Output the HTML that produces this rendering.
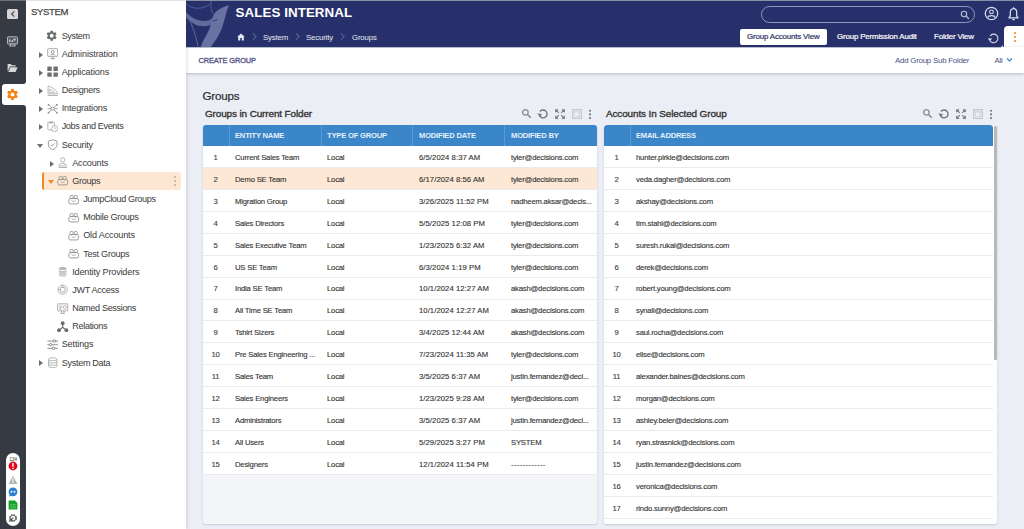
<!DOCTYPE html>
<html lang="en">
<head>
<meta charset="utf-8">
<title>Sales Internal - Groups</title>
<style>
*{box-sizing:border-box;margin:0;padding:0}
html,body{width:1024px;height:529px;overflow:hidden}
body{font-family:"Liberation Sans",Arial,sans-serif;background:#eceef5;color:#333;position:relative;font-size:9px}
.abs{position:absolute}
/* left rail */
#rail{position:absolute;left:0;top:0;width:26px;height:529px;background:#363a42}
#railtop{position:absolute;left:0;top:0;width:26px;height:1px;background:#6f7279}
#collapse{position:absolute;left:7px;top:8.500px;width:11px;height:10.800px;background:#d6d6d9;border-radius:1.500px}
#seltab{position:absolute;left:2px;top:84px;width:25px;height:21px;background:#fff;border-radius:3px 0 0 3px}
.corner{position:absolute;left:23px;width:3px;height:3px;background:#fff}
.corner i{position:absolute;left:0;top:0;width:3px;height:3px;background:#363a42;display:block}
#pill{position:absolute;left:6px;top:453px;width:14px;height:73px;background:#fff;border-radius:7px}
#pill .n{position:absolute;left:0;top:3px;width:14px;text-align:center;font-size:5px;color:#444;letter-spacing:-.2px}
/* sidebar */
#side{position:absolute;left:26px;top:0;width:160px;height:529px;z-index:3;background:#fff;box-shadow:1px 0 3px rgba(60,70,110,.18)}
#sidetop{position:absolute;left:0;top:0;width:160px;height:1px;background:#e4e4e6}
#side h2{position:absolute;left:5px;top:5.800px;font-size:9.600px;font-weight:normal;color:#4a4a4a;letter-spacing:-.38px;line-height:12px;-webkit-text-stroke:.25px #4a4a4a}
.ti{position:absolute;left:0;height:18px;line-height:18px;font-size:9.1px;color:#3a3a3a;white-space:nowrap;letter-spacing:-.32px}
.ti .ar{position:absolute;top:6.8px;width:0;height:0;border-left:4.800px solid #6e6e6e;border-top:3.1px solid transparent;border-bottom:3.1px solid transparent}
.ti .ad{position:absolute;top:8px;width:0;height:0;border-top:4.800px solid #6e6e6e;border-left:3.1px solid transparent;border-right:3.1px solid transparent}
.ti svg{position:absolute;top:3.500px;width:11.400px;height:11.400px;margin-left:-.3px}
.ti span{position:absolute;top:0}
#selrow{position:absolute;left:15.500px;top:172px;width:139px;height:18.300px;background:#fde7d3;border-radius:2.500px;border-left:2.900px solid #f28a1e}
/* header */
#hdr{position:absolute;left:186px;top:0;width:838px;height:47px;background:#27306a;border-top:1px solid #8b8fa5}
#hdr h1{position:absolute;left:49.5px;top:4.300px;font-size:13.4px;line-height:15px;font-weight:bold;color:#fff;white-space:nowrap;letter-spacing:.05px}
.bc{position:absolute;top:31px;font-size:7.8px;line-height:11px;color:#e8eaf3;white-space:nowrap;letter-spacing:-.15px}
.chev{position:absolute;top:33.300px;margin-left:-1px;width:4.500px;height:4.500px;border-top:1px solid #5d6597;border-right:1px solid #5d6597;transform:rotate(45deg)}
#search{position:absolute;left:575px;top:4.500px;width:214px;height:17.400px;border:1.200px solid #9096bc;border-radius:9px}
.tab{position:absolute;top:31.300px;font-size:7.9px;line-height:10px;color:#fff;white-space:nowrap;letter-spacing:-.15px;-webkit-text-stroke:.2px #fff}
#tabsel{position:absolute;left:554px;top:28px;width:86.500px;height:15.600px;background:#fff;border-radius:2px}
#moretab{position:absolute;left:817.600px;top:25px;width:21px;height:22px;background:#fff;border-radius:4px 0 0 0}
/* action bar */
#act{position:absolute;left:186px;top:47px;width:838px;height:25.700px;background:#fff;box-shadow:0 1px 3px rgba(70,72,90,.30);border-top:1px solid #b9bccf}
#act .l{position:absolute;left:12.500px;top:8px;font-size:7.4px;line-height:10px;color:#4c5282;letter-spacing:-.1px;-webkit-text-stroke:.3px #4c5282;white-space:nowrap}
#act .r{position:absolute;top:7.500px;font-size:7.9px;line-height:10px;color:#4a5181;letter-spacing:-.15px;white-space:nowrap}
/* content */
#title{position:absolute;left:202.500px;top:88.500px;font-size:11.6px;line-height:14px;color:#2b2b2b;letter-spacing:-.2px;-webkit-text-stroke:.2px #2b2b2b}
.ph{position:absolute;top:107.800px;font-size:9.950px;line-height:12px;color:#333;white-space:nowrap;letter-spacing:-.12px;-webkit-text-stroke:.35px #333}
.panel{position:absolute;top:125px;height:399px;background:#f4f5f9;border-radius:3px;box-shadow:0 1px 2px rgba(70,80,120,.22);overflow:hidden}
.th{position:absolute;left:0;top:0;height:21px;background:#3a86c8;width:100%}
.th b{position:absolute;top:5.800px;font-size:7.600px;line-height:10px;color:#e6f0fa;white-space:nowrap;letter-spacing:-.2px}
.th i{position:absolute;top:0;width:1px;height:21px;background:#5b9bd3;display:block}
.row{position:absolute;left:0;height:21.93px;background:#fff;border-bottom:1px solid #e9eaf0;width:100%}
.row.sel{background:#fde8d5}
.row span{position:absolute;top:6.900px;font-size:7.7px;line-height:10px;color:#333;white-space:nowrap;letter-spacing:-.2px;-webkit-text-stroke:.12px #333}
.row .n{left:0;width:25px;text-align:center;color:#444}
.row .c1{left:32px}.row .c2{left:124px}.row .c3{left:216px;letter-spacing:.06px}.row .c4{left:308px}
.row.r2{width:389px}
.tool{position:absolute;top:108.800px;height:11px}
</style>
</head>
<body>

<!-- ================= LEFT RAIL ================= -->
<div id="rail">
  <div id="railtop"></div>
  <div id="collapse"><svg class="abs" style="left:.5px;top:.4px" width="10" height="10" viewBox="0 0 10 10"><path d="M6.300 2.300 L3.600 5 L6.300 7.700" fill="none" stroke="#4a4d55" stroke-width="1.2"/></svg></div>
  <svg class="abs" style="left:7px;top:36px" width="11" height="11" viewBox="0 0 11 11"><rect x=".5" y=".8" width="10" height="7.200" rx=".6" fill="#555960" stroke="#b4b6bc" stroke-width="1"/><rect x="2" y="3.4" width="1.4" height="2.6" fill="#c9cbd0"/><rect x="4.6" y="4.2" width="1.4" height="1.8" fill="#c9cbd0"/><circle cx="7.6" cy="3.6" r="1.2" fill="#c9cbd0"/><path d="M4 7.6 L3 10 M7 7.6 L8 10 M2.4 10 H8.6" stroke="#c9cbd0" stroke-width=".9" fill="none"/></svg>
  <svg class="abs" style="left:7px;top:63px" width="11" height="10" viewBox="0 0 11 10"><path d="M.6 1 H3.8 L4.8 2.2 H8.6 V3.6 H3 L.6 8.6 Z" fill="#d4d6da"/><path d="M3.4 4.2 H10.6 L8.6 8.9 H1.2 Z" fill="#d4d6da"/></svg>
  <div id="seltab"></div>
  <div class="corner" style="top:81px"><i style="border-radius:0 0 3px 0"></i></div>
  <div class="corner" style="top:105px"><i style="border-radius:0 3px 0 0"></i></div>
  <svg class="abs" style="left:6px;top:88px" width="13" height="13" viewBox="0 0 24 24"><path fill="#f5820d" d="M19.4 13c.04-.33.06-.66.06-1s-.02-.67-.07-1l2.11-1.65a.5.5 0 0 0 .12-.64l-2-3.46a.5.5 0 0 0-.61-.22l-2.49 1a7.3 7.3 0 0 0-1.73-1l-.38-2.65A.49.49 0 0 0 13.920 2h-4a.49.49 0 0 0-.49.42l-.38 2.650a7.700 7.700 0 0 0-1.730 1l-2.490-1a.5.5 0 0 0-.61.220l-2 3.460a.49.490 0 0 0 .12.640L4.450 11a7.900 7.900 0 0 0 0 2l-2.110 1.650a.5.5 0 0 0-.12.640l2 3.460c.12.220.39.300.610.220l2.490-1c.52.400 1.080.730 1.730 1l.38 2.650c.3.240.24.420.49.420h4c.25 0 .46-.18.490-.42l.38-2.650a7.300 7.300 0 0 0 1.730-1l2.490 1c.23.090.49 0 .61-.22l2-3.460a.5.5 0 0 0-.12-.64L19.400 13zM12 15.800a3.800 3.800 0 1 1 0-7.600 3.800 3.800 0 0 1 0 7.600z"/></svg>
  <div id="pill">
    <div class="n">134</div>
    <svg class="abs" style="left:1.800px;top:8.300px" width="10" height="10" viewBox="0 0 10 10"><circle cx="5" cy="5" r="4.400" fill="#e3061d"/><rect x="4.3" y="1.8" width="1.4" height="4" fill="#fff"/><rect x="4.3" y="6.7" width="1.4" height="1.4" fill="#fff"/></svg>
    <svg class="abs" style="left:1.800px;top:21.500px" width="10" height="10" viewBox="0 0 10 10"><path d="M5 .8 L9.4 9 H.6 Z" fill="#b3b3b3"/><rect x="4.4" y="3.4" width="1.2" height="3" fill="#fff"/><rect x="4.4" y="7" width="1.2" height="1.1" fill="#fff"/></svg>
    <svg class="abs" style="left:1.800px;top:34.200px" width="10" height="10" viewBox="0 0 10 10"><circle cx="5" cy="4.8" r="4.4" fill="#2f7fd1"/><path d="M1.6 7.4 L1 9.6 L3.6 8.6 Z" fill="#2f7fd1"/><circle cx="3.500" cy="4.800" r=".95" fill="#fff"/><circle cx="6.500" cy="4.800" r=".95" fill="#fff"/></svg>
    <svg class="abs" style="left:1.800px;top:47px" width="10" height="10" viewBox="0 0 10 10"><path d="M.6.6 H7 L9.400 3 V9.400 H.6 Z" fill="#15a526"/><path d="M2 4.600 H8 M2 6.200 H8 M2 7.800 H8" stroke="#6fd07a" stroke-width=".6"/></svg>
    <svg class="abs" style="left:1.800px;top:60.300px" width="10" height="10" viewBox="0 0 10 10"><circle cx="5" cy="5" r="3.300" fill="none" stroke="#444" stroke-width="1.100" stroke-dasharray="1.7 .9"/><circle cx="5" cy="5" r="2.800" fill="none" stroke="#444" stroke-width=".7"/><path d="M1.300 8.700 L5.400 4.600" stroke="#444" stroke-width="1.100"/></svg>
  </div>
</div>

<!-- ================= SIDEBAR ================= -->
<div id="side">
  <div id="sidetop"></div>
  <h2>SYSTEM</h2>
  <div id="selrow"></div>
  <svg class="abs" style="left:147px;top:175px" width="4" height="12" viewBox="0 0 4 12"><circle cx="2" cy="2" r=".9" fill="#b7a596"/><circle cx="2" cy="6" r=".9" fill="#b7a596"/><circle cx="2" cy="10" r=".9" fill="#b7a596"/></svg>
  <div id="tree">
  <div class="ti" style="top:26.55px"><svg style="left:20.4px" viewBox="0.600 0.600 22.800 22.800"><path fill="#6b6b6b" d="M19.4 13c.04-.33.06-.66.06-1s-.02-.67-.07-1l2.11-1.65a.5.5 0 0 0 .12-.64l-2-3.46a.5.5 0 0 0-.61-.22l-2.49 1a7.3 7.3 0 0 0-1.73-1l-.38-2.65A.49.49 0 0 0 13.920 2h-4a.49.49 0 0 0-.49.42l-.38 2.650a7.700 7.700 0 0 0-1.730 1l-2.490-1a.5.5 0 0 0-.61.220l-2 3.460a.49.490 0 0 0 .12.640L4.450 11a7.900 7.900 0 0 0 0 2l-2.110 1.650a.5.5 0 0 0-.12.640l2 3.460c.12.220.39.300.610.220l2.490-1c.52.400 1.080.730 1.730 1l.38 2.650c.3.240.24.420.49.420h4c.25 0 .46-.18.490-.42l.38-2.650a7.300 7.300 0 0 0 1.730-1l2.490 1c.23.090.49 0 .61-.22l2-3.460a.5.5 0 0 0-.12-.64L19.400 13zM12 15.900a3.900 3.900 0 1 1 0-7.800 3.900 3.900 0 0 1 0 7.800z"/></svg><span style="left:35.7px;letter-spacing:-0.40px">System</span></div>
  <div class="ti" style="top:44.72px"><i class="ar" style="left:12.5px"></i><svg style="left:21px" viewBox="0 0 11 11"><rect x=".7" y=".7" width="9.6" height="7.4" rx=".6" fill="none" stroke="#9a9a9a" stroke-width=".8"/><circle cx="5.5" cy="3.8" r="1.4" fill="none" stroke="#8a8a8a" stroke-width=".8"/><path d="M3.3 7.2 C3.8 5.600 7.200 5.600 7.700 7.200" fill="none" stroke="#8a8a8a" stroke-width=".8"/><path d="M3.200 10.300 H7.800 M5.500 8.100 V10.300" stroke="#9a9a9a" stroke-width=".9"/></svg><span style="left:35.7px;letter-spacing:-0.11px">Administration</span></div>
  <div class="ti" style="top:62.89px"><i class="ar" style="left:12.5px"></i><svg style="left:21px" viewBox="0 0 11 11"><rect x=".3" y=".5" width="4.3" height="4.3" rx=".5" fill="#707070"/><rect x="6.2" y=".5" width="4.3" height="4.3" rx=".5" fill="#707070"/><rect x=".3" y="6.2" width="4.3" height="4.3" rx=".5" fill="#707070"/><rect x="6.2" y="6.2" width="4.3" height="4.3" rx=".5" fill="#707070"/></svg><span style="left:35.7px;letter-spacing:-0.14px">Applications</span></div>
  <div class="ti" style="top:81.06px"><i class="ar" style="left:12.5px"></i><svg style="left:21px" viewBox="0 0 11 11"><path d="M1 1 V8.600 H10.300 C9.600 5.600 6 2.400 1 1 Z" fill="none" stroke="#a5a5a5" stroke-width=".8"/><path d="M2.600 4 V7.200 H7 C6 5.600 4.600 4.600 2.600 4 Z" fill="none" stroke="#a5a5a5" stroke-width=".7"/><path d="M.6 10.200 H10.400" stroke="#a5a5a5" stroke-width=".8"/></svg><span style="left:35.7px;letter-spacing:-0.31px">Designers</span></div>
  <div class="ti" style="top:99.23px"><i class="ar" style="left:12.5px"></i><svg style="left:21px" viewBox="0 0 11 11"><path d="M1.600 1.800 L9.400 9.200 M9.400 1.800 L1.600 9.200 M.6 5.500 H10.400" stroke="#8d8d8d" stroke-width=".8"/><circle cx="5.5" cy="5.5" r="1.5" fill="#fff" stroke="#8d8d8d" stroke-width=".8"/><circle cx="1.5" cy="1.7" r=".9" fill="#8d8d8d"/><circle cx="9.5" cy="1.7" r=".9" fill="#8d8d8d"/><circle cx="1.5" cy="9.3" r=".9" fill="#8d8d8d"/><circle cx="9.5" cy="9.3" r=".9" fill="#8d8d8d"/></svg><span style="left:35.7px;letter-spacing:-0.18px">Integrations</span></div>
  <div class="ti" style="top:117.40px"><i class="ar" style="left:12.5px"></i><svg style="left:21px" viewBox="0 0 11 11"><rect x=".8" y="1" width="6.4" height="7.6" rx=".7" fill="none" stroke="#a8a8a8" stroke-width=".8"/><path d="M2.300 .8 H5.700 V2.400 H2.300 Z" fill="#a8a8a8"/><circle cx="7.3" cy="7.3" r="2.9" fill="#fff" stroke="#a8a8a8" stroke-width=".8"/><path d="M7.300 5.700 V7.400 L8.500 8.100" fill="none" stroke="#a8a8a8" stroke-width=".7"/></svg><span style="left:35.7px;letter-spacing:-0.37px">Jobs and Events</span></div>
  <div class="ti" style="top:135.57px"><i class="ad" style="left:11.2px"></i><svg style="left:21px" viewBox="0 0 11 11"><path d="M5.500 .7 L9.700 2.200 V5.400 C9.700 7.800 7.800 9.600 5.500 10.400 C3.200 9.600 1.300 7.800 1.300 5.400 V2.200 Z" fill="none" stroke="#8f8f8f" stroke-width=".85"/><path d="M3.700 5.500 L5 6.800 L7.400 4.200" fill="none" stroke="#8f8f8f" stroke-width=".85"/></svg><span style="left:35.7px;letter-spacing:-0.21px">Security</span></div>
  <div class="ti" style="top:153.74px"><i class="ar" style="left:23.7px"></i><svg style="left:31.5px" viewBox="0 0 11 11"><rect x="3.7" y=".8" width="3.6" height="4" rx="1.2" fill="none" stroke="#a9a9a9" stroke-width=".8"/><path d="M1.800 8 C2.200 5.600 8.800 5.600 9.200 8 V8.600 H1.800 Z" fill="none" stroke="#a9a9a9" stroke-width=".8"/><path d="M1.400 10.200 H9.600" stroke="#a9a9a9" stroke-width=".9"/></svg><span style="left:46.2px;letter-spacing:-0.19px">Accounts</span></div>
  <div class="ti" style="top:171.91px"><i class="ad" style="left:22px;border-top-color:#f28a1e"></i><svg style="left:31.5px" viewBox="0 0 11 11"><rect x=".8" y="4.4" width="9.4" height="5.2" rx="1.6" fill="none" stroke="#8f8f8f" stroke-width=".85"/><rect x="2" y="1.4" width="3" height="3" rx="1" fill="none" stroke="#8f8f8f" stroke-width=".8"/><rect x="6" y="1.4" width="3" height="3" rx="1" fill="none" stroke="#8f8f8f" stroke-width=".8"/><path d="M3.500 6.300 C4.300 7.400 6.700 7.400 7.500 6.300" fill="none" stroke="#8f8f8f" stroke-width=".7"/></svg><span style="left:46.2px;letter-spacing:-0.28px">Groups</span></div>
  <div class="ti" style="top:190.08px"><svg style="left:42.5px" viewBox="0 0 11 11"><rect x=".8" y="4.4" width="9.4" height="5.2" rx="1.6" fill="none" stroke="#8f8f8f" stroke-width=".85"/><rect x="2" y="1.4" width="3" height="3" rx="1" fill="none" stroke="#8f8f8f" stroke-width=".8"/><rect x="6" y="1.4" width="3" height="3" rx="1" fill="none" stroke="#8f8f8f" stroke-width=".8"/><path d="M3.500 6.300 C4.300 7.400 6.700 7.400 7.500 6.300" fill="none" stroke="#8f8f8f" stroke-width=".7"/></svg><span style="left:57.2px;letter-spacing:-0.37px">JumpCloud Groups</span></div>
  <div class="ti" style="top:208.25px"><svg style="left:42.5px" viewBox="0 0 11 11"><rect x=".8" y="4.4" width="9.4" height="5.2" rx="1.6" fill="none" stroke="#8f8f8f" stroke-width=".85"/><rect x="2" y="1.4" width="3" height="3" rx="1" fill="none" stroke="#8f8f8f" stroke-width=".8"/><rect x="6" y="1.4" width="3" height="3" rx="1" fill="none" stroke="#8f8f8f" stroke-width=".8"/><path d="M3.500 6.300 C4.300 7.400 6.700 7.400 7.500 6.300" fill="none" stroke="#8f8f8f" stroke-width=".7"/></svg><span style="left:57.2px;letter-spacing:-0.29px">Mobile Groups</span></div>
  <div class="ti" style="top:226.42px"><svg style="left:42.5px" viewBox="0 0 11 11"><rect x=".8" y="4.4" width="9.4" height="5.2" rx="1.6" fill="none" stroke="#8f8f8f" stroke-width=".85"/><rect x="2" y="1.4" width="3" height="3" rx="1" fill="none" stroke="#8f8f8f" stroke-width=".8"/><rect x="6" y="1.4" width="3" height="3" rx="1" fill="none" stroke="#8f8f8f" stroke-width=".8"/><path d="M3.500 6.300 C4.300 7.400 6.700 7.400 7.500 6.300" fill="none" stroke="#8f8f8f" stroke-width=".7"/></svg><span style="left:57.2px;letter-spacing:-0.16px">Old Accounts</span></div>
  <div class="ti" style="top:244.59px"><svg style="left:42.5px" viewBox="0 0 11 11"><rect x=".8" y="4.4" width="9.4" height="5.2" rx="1.6" fill="none" stroke="#8f8f8f" stroke-width=".85"/><rect x="2" y="1.4" width="3" height="3" rx="1" fill="none" stroke="#8f8f8f" stroke-width=".8"/><rect x="6" y="1.4" width="3" height="3" rx="1" fill="none" stroke="#8f8f8f" stroke-width=".8"/><path d="M3.500 6.300 C4.300 7.400 6.700 7.400 7.500 6.300" fill="none" stroke="#8f8f8f" stroke-width=".7"/></svg><span style="left:57.2px;letter-spacing:-0.26px">Test Groups</span></div>
  <div class="ti" style="top:262.76px"><svg style="left:31.5px" viewBox="0 0 11 11"><ellipse cx="5.5" cy="2.4" rx="3.6" ry="1.5" fill="#b5b5b5"/><path d="M1.900 3.400 V8.600 C1.900 10.600 9.100 10.600 9.100 8.600 V3.400 C9.100 5.300 1.900 5.300 1.900 3.400 Z" fill="#bdbdbd"/><path d="M1.900 5.600 C1.900 7.500 9.100 7.500 9.100 5.600 M1.900 7.500 C1.900 9.300 9.100 9.300 9.100 7.500" fill="none" stroke="#fff" stroke-width=".5"/></svg><span style="left:46.2px;letter-spacing:-0.17px">Identity Providers</span></div>
  <div class="ti" style="top:280.93px"><svg style="left:31.5px" viewBox="0 0 11 11"><circle cx="5.5" cy="5.5" r="4.5" fill="none" stroke="#b3b3b3" stroke-width=".9"/><rect x="3.3" y="3.3" width="4.4" height="4.4" rx=".8" fill="none" stroke="#a4a4a4" stroke-width=".9"/><path d="M5.500 1 V3.300 M1 5.500 H3.300" stroke="#a4a4a4" stroke-width=".8"/></svg><span style="left:46.2px;letter-spacing:-0.30px">JWT Access</span></div>
  <div class="ti" style="top:299.10px"><svg style="left:31.5px" viewBox="0 0 11 11"><rect x=".6" y=".8" width="9.8" height="6.8" rx=".6" fill="none" stroke="#9d9d9d" stroke-width=".8"/><path d="M2 3 H5 M2 4.600 H5 M2 6.100 H4" stroke="#9d9d9d" stroke-width=".7"/><circle cx="7.6" cy="4.2" r="1.6" fill="none" stroke="#9d9d9d" stroke-width=".7"/><path d="M3.400 10.200 H7.600 M4.300 7.600 V10.200 M6.700 7.600 V10.200" stroke="#9d9d9d" stroke-width=".8"/></svg><span style="left:46.2px;letter-spacing:-0.35px">Named Sessions</span></div>
  <div class="ti" style="top:317.27px"><svg style="left:31.5px" viewBox="0 0 11 11"><circle cx="5.5" cy="2.1" r="1.800" fill="#6a6a6a"/><circle cx="1.9" cy="8.900" r="1.800" fill="#6a6a6a"/><circle cx="9.1" cy="8.900" r="1.800" fill="#6a6a6a"/><path d="M5.500 2 V6 L2 9 M5.500 6 L9 9" fill="none" stroke="#6a6a6a" stroke-width="1.100"/></svg><span style="left:46.2px;letter-spacing:-0.31px">Relations</span></div>
  <div class="ti" style="top:335.44px"><svg style="left:21px" viewBox="0 0 11 11"><path d="M.4 2 H10.600 M.4 5.500 H10.600 M.4 9 H10.600" stroke="#7a7a7a" stroke-width=".8"/><circle cx="7.2" cy="2" r="1.2" fill="#fff" stroke="#7a7a7a" stroke-width=".8"/><circle cx="3.6" cy="5.5" r="1.2" fill="#fff" stroke="#7a7a7a" stroke-width=".8"/><circle cx="6.4" cy="9" r="1.2" fill="#fff" stroke="#7a7a7a" stroke-width=".8"/></svg><span style="left:35.7px;letter-spacing:-0.15px">Settings</span></div>
  <div class="ti" style="top:353.61px"><i class="ar" style="left:12.5px"></i><svg style="left:21px" viewBox="0 0 11 11"><ellipse cx="5.5" cy="2.2" rx="4" ry="1.5" fill="none" stroke="#a6a6a6" stroke-width=".8"/><path d="M1.500 2.200 V8.800 C1.500 10.700 9.500 10.700 9.500 8.800 V2.200 M1.500 4.400 C1.500 6.200 9.500 6.200 9.500 4.400 M1.500 6.600 C1.500 8.400 9.500 8.400 9.500 6.600" fill="none" stroke="#a6a6a6" stroke-width=".8"/></svg><span style="left:35.7px;letter-spacing:-0.31px">System Data</span></div>
  </div>
</div>

<!-- ================= HEADER ================= -->
<div id="hdr">
  <svg class="abs" style="left:0;top:0" width="48" height="46" viewBox="0 0 48 46">
    <path d="M0.4 3.3 C6 8.600 18 8.600 24.500 2.800" fill="none" stroke="#566098" stroke-width=".9"/>
    <path d="M24.800 0 C24.800 5 25.300 9.500 27 13" fill="none" stroke="#566098" stroke-width=".9"/>
    <path d="M0.4 14.200 C4 18 9.500 32 12.200 46.400" fill="none" stroke="#5d669c" stroke-width="1"/>
    <path d="M0 11.300 C5 16.500 11 19.700 17 20 C20.500 20.100 23.500 19.300 26.500 17.500 L31.500 19.200 C28 22.500 24 24.800 19 25.200 C11 25.500 5 22 0 16.200 Z" fill="#636b9d"/>
    <path d="M43 4.200 C38 5.500 33.500 7.500 30.200 10.400 C27.800 12.600 26.800 15 26.200 18 C25.500 21.500 24.800 24 23.500 27.400 C22 31.300 20 35 18.300 37.800 C17 40.500 15.500 43.800 14.600 46.400 H24.500 C26 44 27.500 42 29.200 39.700 C32 35.500 34.300 31.500 35.800 27.400 C37.500 22.500 38.600 18 39.600 14.200 C40.400 10.800 41.500 7.300 43 4.200 Z" fill="#6a72a1"/>
    <path d="M26.800 19.900 L31.600 18.700" fill="none" stroke="#27306a" stroke-width=".8"/>
  </svg>
  <h1>SALES INTERNAL</h1>
  <svg class="abs" style="left:51px;top:32px" width="8" height="8" viewBox="0 0 8 8"><path d="M4 .4 L.2 3.900 H1.200 V7.400 H3.200 V5 H4.800 V7.400 H6.800 V3.900 H7.800 Z" fill="#e4e6f0"/></svg>
  <i class="chev" style="left:66px"></i>
  <span class="bc" style="left:77px">System</span>
  <i class="chev" style="left:109px"></i>
  <span class="bc" style="left:120px">Security</span>
  <i class="chev" style="left:154px"></i>
  <span class="bc" style="left:166px">Groups</span>
  <div id="search"><svg class="abs" style="left:198px;top:3px" width="10" height="10" viewBox="0 0 10 10"><circle cx="4" cy="4" r="2.700" fill="none" stroke="#b9bdd6" stroke-width="1.100"/><path d="M6 6 L9 9" stroke="#b9bdd6" stroke-width="1.300"/></svg></div>
  <svg class="abs" style="left:797.800px;top:4.700px" width="15" height="15" viewBox="0 0 15 15"><circle cx="7.5" cy="7.5" r="6.200" fill="none" stroke="#d4d7e8" stroke-width="1.300"/><circle cx="7.5" cy="5.900" r="1.900" fill="none" stroke="#d4d7e8" stroke-width="1.100"/><path d="M3.700 11.600 C4.300 8.900 10.700 8.900 11.300 11.600" fill="none" stroke="#d4d7e8" stroke-width="1.100"/></svg>
  <svg class="abs" style="left:820.800px;top:5px" width="13" height="16" viewBox="0 0 13 16"><path d="M6.500 2.600 C4.100 2.600 3.300 4.700 3.300 6.600 V9.800 L1.900 11.800 H11.100 L9.700 9.800 V6.600 C9.700 4.700 8.900 2.600 6.500 2.600 Z" fill="none" stroke="#dcdfee" stroke-width="1.250" stroke-linejoin="round"/><path d="M6.500 1.200 V2.600" stroke="#dcdfee" stroke-width="1.200"/><path d="M5.300 13.600 H7.700" stroke="#dcdfee" stroke-width="1.300"/></svg>
  <div id="tabsel"></div>
  <span class="tab" style="left:561px;color:#2a3166;-webkit-text-stroke:.2px #2a3166">Group Accounts View</span>
  <span class="tab" style="left:651px">Group Permission Audit</span>
  <span class="tab" style="left:748px">Folder View</span>
  <svg class="abs" style="left:801px;top:30.500px" width="13" height="13" viewBox="0 0 13 13"><path d="M2.800 8.500 A4.300 4.300 0 1 0 3.200 3.800" fill="none" stroke="#d9dcea" stroke-width="1.100"/><path d="M.8 6.200 L2.800 9 L5.200 6.600 Z" fill="#d9dcea"/></svg>
  <div class="abs" style="left:814px;top:43px;width:3px;height:3px;background:#fff"><div style="width:3px;height:3px;background:#27306a;border-radius:0 0 3px 0"></div></div>
  <div id="moretab"><svg class="abs" style="left:9px;top:5px" width="4" height="12" viewBox="0 0 4 12"><circle cx="2" cy="2" r="1" fill="#f5820d"/><circle cx="2" cy="6" r="1" fill="#f5820d"/><circle cx="2" cy="10" r="1" fill="#f5820d"/></svg></div>
</div>

<!-- ================= ACTION BAR ================= -->
<div id="act">
  <div class="abs" style="left:815px;top:-1px;width:23px;height:1px;background:#fff"></div>
  <span class="l">CREATE GROUP</span>
  <span class="r" style="left:709px;letter-spacing:-.24px">Add Group Sub Folder</span>
  <span class="r" style="left:808.400px">All</span>
  <svg class="abs" style="left:819.900px;top:9.300px" width="7" height="6" viewBox="0 0 7 6"><path d="M1 1.500 L3.500 4 L6 1.500" fill="none" stroke="#3a86c8" stroke-width="1.200"/></svg>
</div>

<!-- ================= CONTENT ================= -->
<div id="title">Groups</div>
<div class="ph" style="left:205px">Groups in Current Folder</div>
<div class="ph" style="left:606px">Accounts In Selected Group</div>

<div class="tool" id="tool1" style="left:521px"><svg class="abs" style="left:0;top:-.6px" width="11" height="11" viewBox="0 0 11 11"><circle cx="4.4" cy="4.4" r="2.8" fill="none" stroke="#8a8a8a" stroke-width="1.3"/><path d="M6.500 6.500 L9.700 9.700" stroke="#8a8a8a" stroke-width="1.5"/></svg><svg class="abs" style="left:15.900px;top:-.7px" width="12" height="12" viewBox="0 0 13 13"><path d="M2.900 8.600 A4.300 4.300 0 1 0 3.200 3.800" fill="none" stroke="#707070" stroke-width="1.450"/><path d="M.5 6 L2.900 9.400 L5.500 6.500 Z" fill="#707070"/></svg><svg class="abs" style="left:33.900px;top:-.3px" width="10" height="10" viewBox="0 0 10 10"><path d="M.7 3.200 V.7 H3.200 M6.800 .7 H9.300 V3.200 M9.300 6.800 V9.300 H6.800 M3.200 9.300 H.7 V6.800 M1 1 L3.800 3.800 M9 1 L6.200 3.800 M9 9 L6.200 6.200 M1 9 L3.800 6.200" fill="none" stroke="#7c7c7c" stroke-width="1.150"/></svg><svg class="abs" style="left:51px;top:.4px" width="10" height="10" viewBox="0 0 10 10"><rect x=".5" y=".5" width="9" height="9" fill="#e2e3e8" stroke="#c4c5ca" stroke-width=".9"/><rect x="2.600" y="2.600" width="4.800" height="4.800" fill="#f0f1f5" stroke="#cfd0d5" stroke-width=".6"/><path d="M.5 3.300 H9.500 M6.700 .5 V9.500" stroke="#cfd0d5" stroke-width=".5"/></svg><svg class="abs" style="left:67px;top:-.1px" width="4" height="11" viewBox="0 0 4 11"><circle cx="2" cy="1.700" r="1.050" fill="#777"/><circle cx="2" cy="5.400" r="1.050" fill="#777"/><circle cx="2" cy="9.100" r="1.050" fill="#777"/></svg></div>
<div class="tool" id="tool2" style="left:922px"><svg class="abs" style="left:0;top:-.6px" width="11" height="11" viewBox="0 0 11 11"><circle cx="4.4" cy="4.4" r="2.8" fill="none" stroke="#8a8a8a" stroke-width="1.3"/><path d="M6.500 6.500 L9.700 9.700" stroke="#8a8a8a" stroke-width="1.5"/></svg><svg class="abs" style="left:15.900px;top:-.7px" width="12" height="12" viewBox="0 0 13 13"><path d="M2.900 8.600 A4.300 4.300 0 1 0 3.200 3.800" fill="none" stroke="#707070" stroke-width="1.450"/><path d="M.5 6 L2.900 9.400 L5.500 6.500 Z" fill="#707070"/></svg><svg class="abs" style="left:33.900px;top:-.3px" width="10" height="10" viewBox="0 0 10 10"><path d="M.7 3.200 V.7 H3.200 M6.800 .7 H9.300 V3.200 M9.300 6.800 V9.300 H6.800 M3.200 9.300 H.7 V6.800 M1 1 L3.800 3.800 M9 1 L6.200 3.800 M9 9 L6.200 6.200 M1 9 L3.800 6.200" fill="none" stroke="#7c7c7c" stroke-width="1.150"/></svg><svg class="abs" style="left:51px;top:.4px" width="10" height="10" viewBox="0 0 10 10"><rect x=".5" y=".5" width="9" height="9" fill="#e2e3e8" stroke="#c4c5ca" stroke-width=".9"/><rect x="2.600" y="2.600" width="4.800" height="4.800" fill="#f0f1f5" stroke="#cfd0d5" stroke-width=".6"/><path d="M.5 3.300 H9.500 M6.700 .5 V9.500" stroke="#cfd0d5" stroke-width=".5"/></svg><svg class="abs" style="left:67px;top:-.1px" width="4" height="11" viewBox="0 0 4 11"><circle cx="2" cy="1.700" r="1.050" fill="#777"/><circle cx="2" cy="5.400" r="1.050" fill="#777"/><circle cx="2" cy="9.100" r="1.050" fill="#777"/></svg></div>

<div class="panel" id="p1" style="left:203px;width:394px">
  <div class="th"><i style="left:26px"></i><i style="left:118px"></i><i style="left:209px"></i><i style="left:301px"></i>
    <b style="left:32px">ENTITY NAME</b><b style="left:124px">TYPE OF GROUP</b><b style="left:216px">MODIFIED DATE</b><b style="left:308px">MODIFIED BY</b></div>
  <div class="row" style="top:21.00px"><span class="n">1</span><span class="c1">Current Sales Team</span><span class="c2">Local</span><span class="c3">6/5/2024 8:37 AM</span><span class="c4">tyler@decisions.com</span></div>
  <div class="row sel" style="top:42.93px"><span class="n">2</span><span class="c1">Demo SE Team</span><span class="c2">Local</span><span class="c3">6/17/2024 8:56 AM</span><span class="c4">tyler@decisions.com</span></div>
  <div class="row" style="top:64.86px"><span class="n">3</span><span class="c1">Migration Group</span><span class="c2">Local</span><span class="c3">3/26/2025 11:52 PM</span><span class="c4">nadheem.aksar@decis...</span></div>
  <div class="row" style="top:86.79px"><span class="n">4</span><span class="c1">Sales Directors</span><span class="c2">Local</span><span class="c3">5/5/2025 12:08 PM</span><span class="c4">tyler@decisions.com</span></div>
  <div class="row" style="top:108.72px"><span class="n">5</span><span class="c1">Sales Executive Team</span><span class="c2">Local</span><span class="c3">1/23/2025 6:32 AM</span><span class="c4">tyler@decisions.com</span></div>
  <div class="row" style="top:130.65px"><span class="n">6</span><span class="c1">US SE Team</span><span class="c2">Local</span><span class="c3">6/3/2024 1:19 PM</span><span class="c4">tyler@decisions.com</span></div>
  <div class="row" style="top:152.58px"><span class="n">7</span><span class="c1">India SE Team</span><span class="c2">Local</span><span class="c3">10/1/2024 12:27 AM</span><span class="c4">akash@decisions.com</span></div>
  <div class="row" style="top:174.51px"><span class="n">8</span><span class="c1">All Time SE Team</span><span class="c2">Local</span><span class="c3">10/1/2024 12:27 AM</span><span class="c4">akash@decisions.com</span></div>
  <div class="row" style="top:196.44px"><span class="n">9</span><span class="c1">Tshirt Sizers</span><span class="c2">Local</span><span class="c3">3/4/2025 12:44 AM</span><span class="c4">akash@decisions.com</span></div>
  <div class="row" style="top:218.37px"><span class="n">10</span><span class="c1">Pre Sales Engineering ...</span><span class="c2">Local</span><span class="c3">7/23/2024 11:35 AM</span><span class="c4">tyler@decisions.com</span></div>
  <div class="row" style="top:240.30px"><span class="n">11</span><span class="c1">Sales Team</span><span class="c2">Local</span><span class="c3">3/5/2025 6:37 AM</span><span class="c4">justin.fernandez@deci...</span></div>
  <div class="row" style="top:262.23px"><span class="n">12</span><span class="c1">Sales Engineers</span><span class="c2">Local</span><span class="c3">1/23/2025 9:28 AM</span><span class="c4">tyler@decisions.com</span></div>
  <div class="row" style="top:284.16px"><span class="n">13</span><span class="c1">Administrators</span><span class="c2">Local</span><span class="c3">3/5/2025 6:37 AM</span><span class="c4">justin.fernandez@deci...</span></div>
  <div class="row" style="top:306.09px"><span class="n">14</span><span class="c1">All Users</span><span class="c2">Local</span><span class="c3">5/29/2025 3:27 PM</span><span class="c4">SYSTEM</span></div>
  <div class="row" style="top:328.02px"><span class="n">15</span><span class="c1">Designers</span><span class="c2">Local</span><span class="c3">12/1/2024 11:54 PM</span><span class="c4" style="letter-spacing:.33px">------------</span></div>
</div>
<div class="panel" id="p2" style="left:604px;width:393px;background:#fff">
  <div class="th" style="width:389px;border-radius:3px 3px 0 0"><i style="left:26px"></i><b style="left:32px">EMAIL ADDRESS</b></div>
  <div class="row r2" style="top:21.00px"><span class="n">1</span><span class="c1">hunter.pirkle@decisions.com</span></div>
  <div class="row r2" style="top:42.93px"><span class="n">2</span><span class="c1">veda.dagher@decisions.com</span></div>
  <div class="row r2" style="top:64.86px"><span class="n">3</span><span class="c1">akshay@decisions.com</span></div>
  <div class="row r2" style="top:86.79px"><span class="n">4</span><span class="c1">tim.stahl@decisions.com</span></div>
  <div class="row r2" style="top:108.72px"><span class="n">5</span><span class="c1">suresh.rukal@decisions.com</span></div>
  <div class="row r2" style="top:130.65px"><span class="n">6</span><span class="c1">derek@decisions.com</span></div>
  <div class="row r2" style="top:152.58px"><span class="n">7</span><span class="c1">robert.young@decisions.com</span></div>
  <div class="row r2" style="top:174.51px"><span class="n">8</span><span class="c1">synali@decisions.com</span></div>
  <div class="row r2" style="top:196.44px"><span class="n">9</span><span class="c1">saul.rocha@decisions.com</span></div>
  <div class="row r2" style="top:218.37px"><span class="n">10</span><span class="c1">elise@decisions.com</span></div>
  <div class="row r2" style="top:240.30px"><span class="n">11</span><span class="c1">alexander.baines@decisions.com</span></div>
  <div class="row r2" style="top:262.23px"><span class="n">12</span><span class="c1">morgan@decisions.com</span></div>
  <div class="row r2" style="top:284.16px"><span class="n">13</span><span class="c1">ashley.beier@decisions.com</span></div>
  <div class="row r2" style="top:306.09px"><span class="n">14</span><span class="c1">ryan.strasnick@decisions.com</span></div>
  <div class="row r2" style="top:328.02px"><span class="n">15</span><span class="c1">justin.fernandez@decisions.com</span></div>
  <div class="row r2" style="top:349.95px"><span class="n">16</span><span class="c1">veronica@decisions.com</span></div>
  <div class="row r2" style="top:371.88px"><span class="n">17</span><span class="c1">rindo.sunny@decisions.com</span></div>
  <div class="row r2" style="top:393.81px"></div>
  <div class="abs" style="left:390px;top:1px;width:2.600px;height:234px;background:#b9b9b9;border-radius:1px"></div>
</div>

</body>
</html>
